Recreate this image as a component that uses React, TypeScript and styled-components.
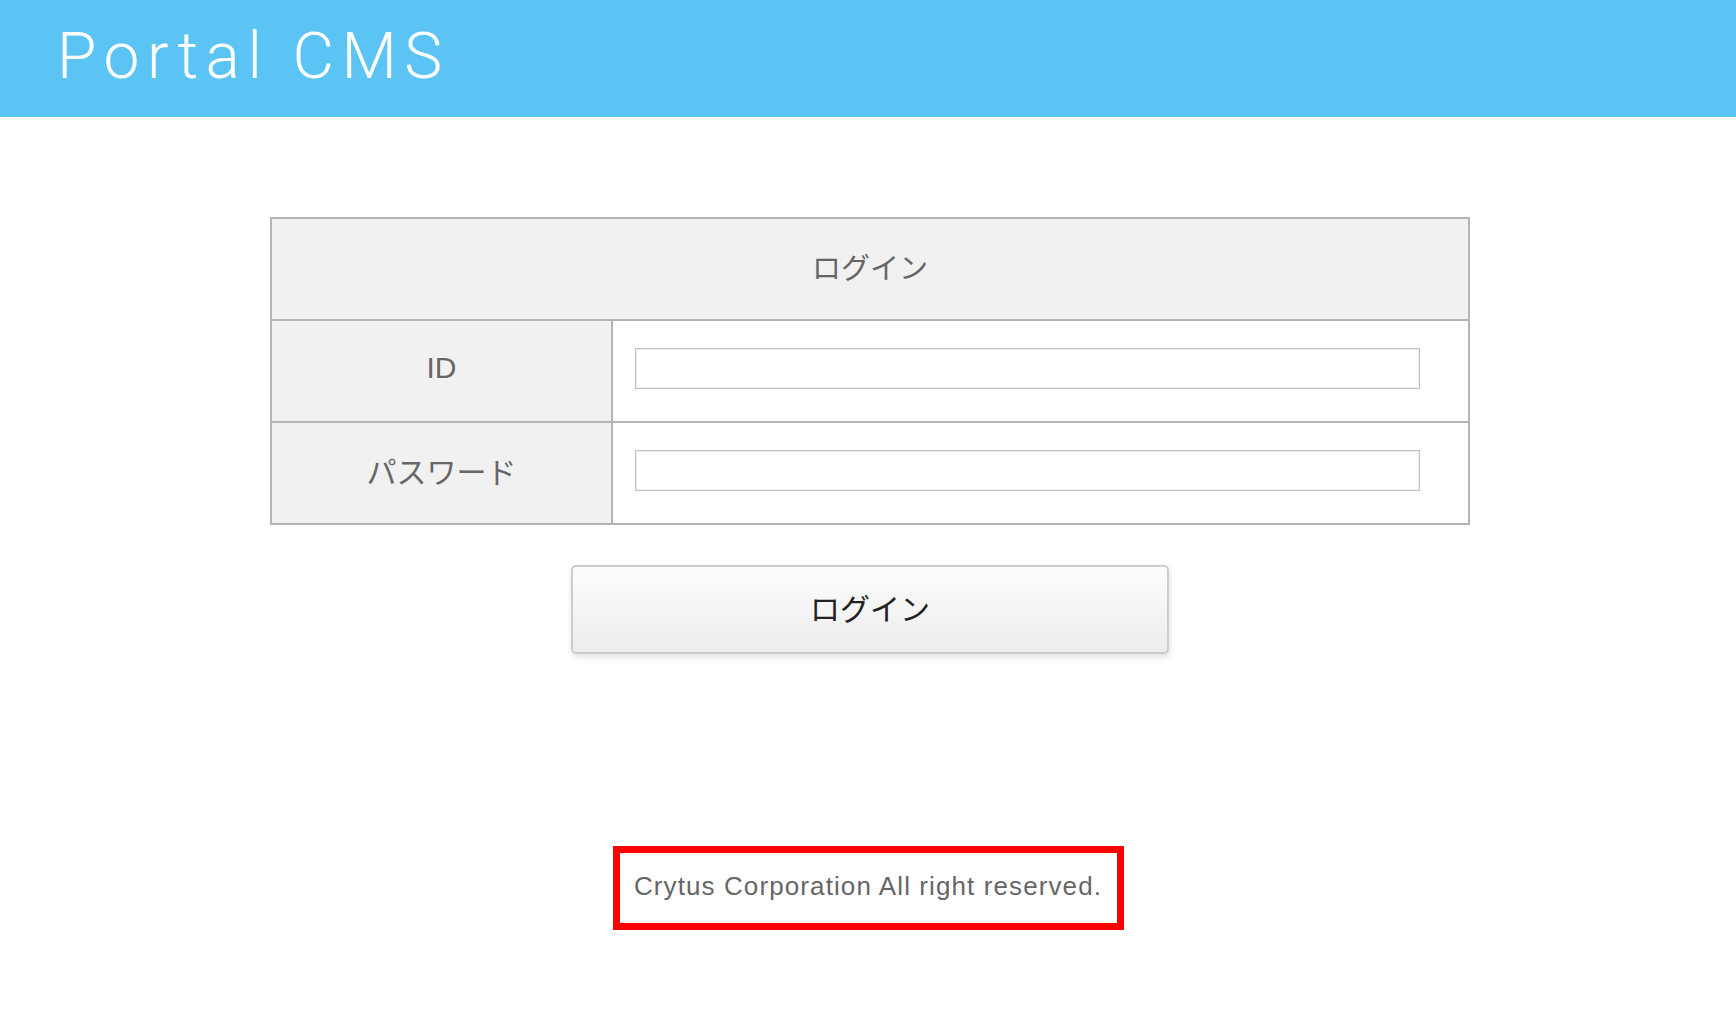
import styled, { createGlobalStyle } from "styled-components";

const GlobalStyle = createGlobalStyle`
  html, body {
    margin: 0;
    padding: 0;
    background: #ffffff;
    font-family: "Liberation Sans", "Noto Sans CJK JP", sans-serif;
  }
`;

const Page = styled.div`
  min-height: 1029px;
  display: flex;
  flex-direction: column;
  align-items: center;
`;

// ヘッダー
const HeaderBar = styled.header`
  align-self: stretch;
  height: 117px;
  background: #5bc4f4;
  display: flex;
  align-items: center;
  padding-left: 57px;
  box-sizing: border-box;
`;

const Brand = styled.h1`
  margin: 0;
  color: #ffffff;
  font-family: Roboto, "Liberation Sans", sans-serif;
  font-weight: 300;
  font-size: 64px;
  letter-spacing: 7.5px;
  line-height: 1;
  padding-bottom: 4px;
`;

const LoginTable = styled.table`
  margin-top: 100px;
  margin-left: 4px;
  width: 1200px;
  border-collapse: collapse;
  border: 2px solid #b4b4b4;
  color: #666666;
`;

const Row = styled.tr`
  height: 102px;
`;

const HeadCell = styled.th`
  background: #f1f1f1;
  border: 2px solid #b4b4b4;
  font-size: 29px;
  font-weight: 400;
  text-align: center;
  padding: 0 0 6px;
`;

const LabelCell = styled.th`
  width: 339px;
  background: #f1f1f1;
  border: 2px solid #b4b4b4;
  font-size: 30px;
  font-weight: 400;
  text-align: center;
  padding: 0 0 6px;
`;

const FieldCell = styled.td`
  background: #ffffff;
  border: 2px solid #b4b4b4;
  padding: 0 20px 6px 22px;
`;

const TextInput = styled.input`
  display: block;
  width: 785px;
  height: 41px;
  box-sizing: border-box;
  border: 1px solid #c2c2c2;
  box-shadow: inset 0 0 0 1px #ececec;
  background: #ffffff;
  font-size: 18px;
  padding: 0 8px;
  outline: none;
`;

const SubmitButton = styled.button`
  margin-top: 40px;
  margin-left: 4px;
  width: 598px;
  height: 89px;
  border: 2px solid #cccccc;
  border-radius: 5px;
  background: linear-gradient(#fdfdfd, #ececec);
  box-shadow: 1px 3px 6px rgba(0, 0, 0, 0.12);
  color: #222222;
  font-family: "Liberation Sans", "Noto Sans CJK JP", sans-serif;
  font-size: 30px;
  padding: 0 0 5px;
  cursor: pointer;
`;

const Footer = styled.footer`
  margin-top: 192px;
  width: 511px;
  height: 84px;
  box-sizing: border-box;
  border: 7px solid #ff0000;
  padding-bottom: 4px;
  display: flex;
  align-items: center;
  justify-content: center;
  color: #666666;
  font-size: 26px;
  letter-spacing: 1.1px;
`;

const App = () => (
  <Page>
    <GlobalStyle />
    <HeaderBar>
      <Brand>Portal CMS</Brand>
    </HeaderBar>

    <LoginTable>
      <tbody>
        <Row>
          <HeadCell colSpan={2}>ログイン</HeadCell>
        </Row>
        <Row>
          <LabelCell>ID</LabelCell>
          <FieldCell>
            <TextInput type="text" />
          </FieldCell>
        </Row>
        <Row>
          <LabelCell>パスワード</LabelCell>
          <FieldCell>
            <TextInput type="password" />
          </FieldCell>
        </Row>
      </tbody>
    </LoginTable>

    <SubmitButton type="button">ログイン</SubmitButton>

    <Footer>Crytus Corporation All right reserved.</Footer>
  </Page>
);

export default App;
